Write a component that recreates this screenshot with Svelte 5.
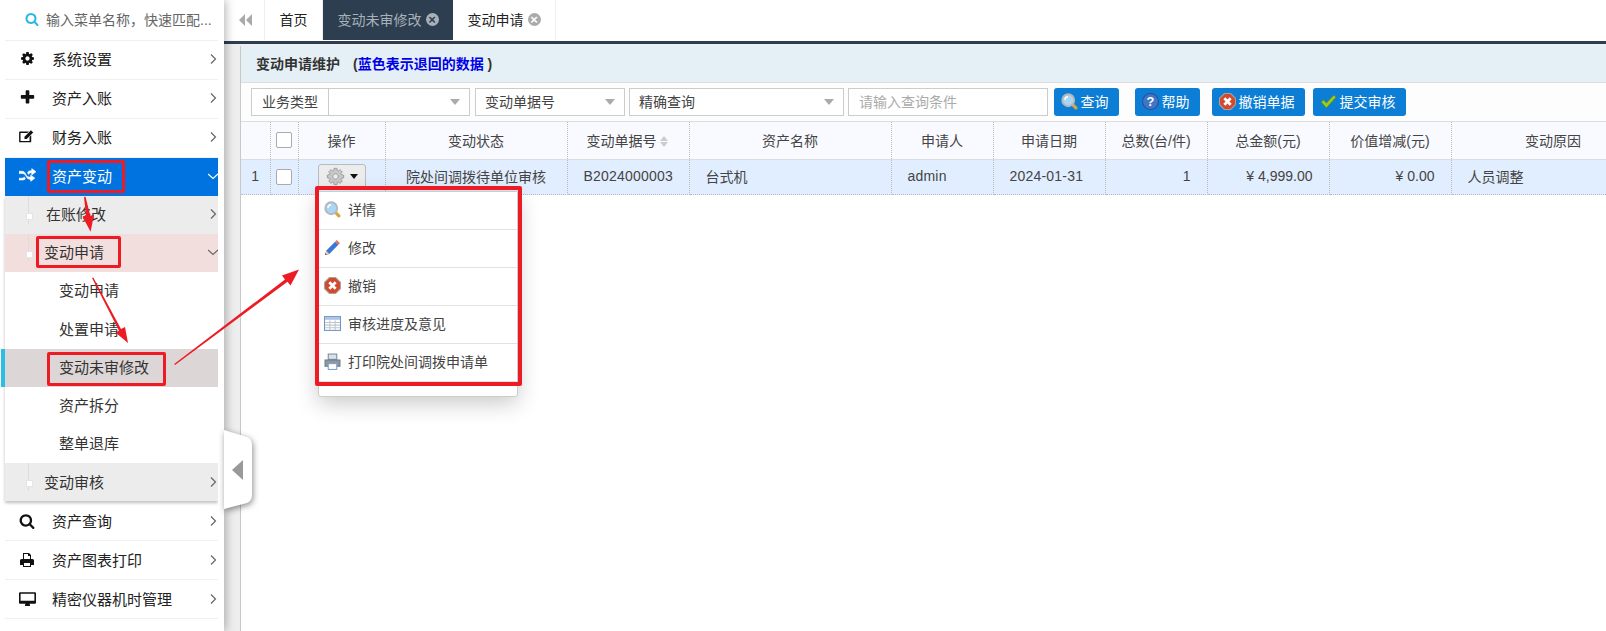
<script>
    const ICONS = {
        cog: "M1152 896q0-106-75-181t-181-75-181 75-75 181 75 181 181 75 181-75 75-181zm512-109v222q0 12-8 23t-20 13l-185 28q-19 54-39 91 35 50 107 138 10 12 10 25t-9 23q-27 37-99 108t-94 71q-12 0-26-9l-138-108q-44 23-91 38-16 136-29 186-7 28-36 28h-222q-14 0-24.500-8.500t-11.500-21.500l-28-184q-49-16-90-37l-141 107q-10 9-25 9-14 0-25-11-126-114-165-168-7-10-7-23 0-12 8-23 15-21 51-66.500t54-70.500q-27-50-41-99l-183-27q-13-2-21-12.500t-8-23.500v-222q0-12 8-23t19-13l186-28q14-46 39-92-40-57-107-138-10-12-10-24 0-10 9-23 26-36 98.500-107.500t94.500-71.500q13 0 26 10l138 107q44-23 91-38 16-136 29-186 7-28 36-28h222q14 0 24.500 8.500t11.500 21.500l28 184q49 16 90 37l142-107q9-9 24-9 13 0 25 10 129 119 165 170 7 8 7 22 0 12-8 23-15 21-51 66.500t-54 70.500q26 50 41 98l183 28q13 2 21 12.500t8 23.500z",
        plus: "M1600 736v192q0 40-28 68t-68 28h-416v416q0 40-28 68t-68 28h-192q-40 0-68-28t-28-68v-416h-416q-40 0-68-28t-28-68v-192q0-40 28-68t68-28h416v-416q0-40 28-68t68-28h192q40 0 68 28t28 68v416h416q40 0 68 28t28 68z",
        search: "M1216 832q0-185-131.500-316.500t-316.500-131.500-316.500 131.500-131.500 316.500 131.500 316.500 316.500 131.500 316.500-131.500 131.500-316.500zm512 832q0 52-38 90t-90 38q-54 0-90-38l-343-342q-179 124-399 124-143 0-273.500-55.500t-225-150-150-225-55.500-273.500 55.500-273.500 150-225 225-150 273.500-55.500 273.500 55.500 225 150 150 225 55.500 273.500q0 220-124 399l343 343q37 37 37 90z",
        edit: "M224 384h1024l-192 192H288v896h1024V1024l192-192v704q0 96-96 96H224q-96 0-96-96V480q0-96 96-96z M736 992l736-736 256 256-736 736H736z",
        random: "M0 512h384q256 0 384 256l128 256q128 192 384 192h128v-256l512 384-512 384v-256h-128q-256 0-384-256l-128-256q-128-192-384-192H0z M0 1344h384q128 0 256-128l128 224q-128 128-384 128H0z M1024 640q128-192 384-192h128V192l512 384-512 384V704h-128q-128 0-256 192z",
        print: "M512 128h768l256 256v512h192q192 0 192 192v576h-384v256H512v-256H128v-576q0-192 192-192h192z M640 256v640h768V512h-256V256z M640 1408v384h768v-384z",
        desktop: "M128 256h1792q128 0 128 128v1152q0 128-128 128h-640l64 256H704l64-256H128q-128 0-128-128V384q0-128 128-128z M192 448v832h1664V448z"
    };

    const BOXES = { cog: 1792, plus: 1792, search: 1792, edit: 2048, random: 2048, print: 2048, desktop: 2048 };

    const topMenu = [
        { label: "系统设置", icon: "cog", size: 15 },
        { label: "资产入账", icon: "plus", size: 17 },
        { label: "财务入账", icon: "edit", size: 18 }
    ];
    const bottomMenu = [
        { label: "资产查询", icon: "search", size: 16 },
        { label: "资产图表打印", icon: "print", size: 16 },
        { label: "精密仪器机时管理", icon: "desktop", size: 17 }
    ];
    const children = [
        { label: "变动申请" },
        { label: "处置申请", tall: true },
        { label: "变动未审修改", selected: true },
        { label: "资产拆分" },
        { label: "整单退库" }
    ];
    const columns = [
        { w: 29, t: "" },
        { w: 28, t: "", check: true },
        { w: 87, t: "操作" },
        { w: 182, t: "变动状态" },
        { w: 122, t: "变动单据号", sort: true },
        { w: 202, t: "资产名称" },
        { w: 102, t: "申请人" },
        { w: 112, t: "申请日期" },
        { w: 102, t: "总数(台/件)" },
        { w: 122, t: "总金额(元)" },
        { w: 122, t: "价值增减(元)" },
        { w: 204, t: "变动原因" }
    ];
    const actions = [
        { label: "详情", icon: "lens" },
        { label: "修改", icon: "pencil" },
        { label: "撤销", icon: "cancel" },
        { label: "审核进度及意见", icon: "grid" },
        { label: "打印院处间调拨申请单", icon: "printer" }
    ];
    const buttons = [
        { label: "查询", icon: "lens", w: 65, gap: 6 },
        { label: "帮助", icon: "help", w: 65, gap: 16 },
        { label: "撤销单据", icon: "cancel", w: 93, gap: 12 },
        { label: "提交审核", icon: "check", w: 93, gap: 8 }
    ];
</script>

{#snippet fa(name, size)}
    <svg class="fa" width={size} height={size} viewBox="0 0 {BOXES[name]} {BOXES[name]}">
        <path fill="currentColor" stroke="currentColor" stroke-width={name === "random" ? 70 : 0} fill-rule="evenodd" d={ICONS[name]} />
    </svg>
{/snippet}

{#snippet chevron(open)}
    <svg class="chev" width="10" height="10" viewBox="0 0 10 10">
        <path fill="none" stroke="#666" stroke-width="1.2" d={open ? "M0 3l5 4.500 5-4.500" : "M3 .5l4.500 4.500L3 9.500"} />
    </svg>
{/snippet}

{#snippet color(name)}
    <svg class="ci" width="17" height="17" viewBox="0 0 16 16">
        {#if name === "lens"}
            <path d="M10.500 10.500l3.500 3.500" stroke="#d9a441" stroke-width="3" stroke-linecap="round" />
            <circle cx="6.800" cy="6.800" r="5.600" fill="#a9d6f2" stroke="#b4b8bc" stroke-width="1.800" />
            <path d="M3.600 6.500a3.300 3.300 0 0 1 3-3" fill="none" stroke="#fff" stroke-width="1.300" />
        {:else if name === "pencil"}
            <path d="M1 15l1-4 8.500-8.500 3 3L5 14z" fill="#3a78d6" />
            <path d="M10.500 2.500l1.500-1.500 3 3-1.500 1.500z" fill="#e0705a" />
            <path d="M1 15l1-4 3 3z" fill="#f1cf8e" />
            <path d="M1 15l.4-1.600 1.200 1.200z" fill="#333" />
        {:else if name === "cancel"}
            <path d="M5 .5h6L15.500 5v6L11 15.500H5L.5 11V5z" fill="#d2492e" stroke="#a9a29c" />
            <path d="M5 5l6 6M11 5l-6 6" stroke="#fff" stroke-width="2.600" />
        {:else if name === "grid"}
            <rect x=".5" y="1.500" width="15" height="13" fill="#fff" stroke="#6f94c4" />
            <rect x="1" y="2" width="14" height="2.500" fill="#a9c2e4" />
            <path d="M1 7h14M1 9.500h14M1 12h14M5.500 5v9M10.500 5v9" stroke="#bfc6ce" />
        {:else if name === "printer"}
            <rect x="4" y="1" width="8" height="5" fill="#d6e2ee" stroke="#7e8c9a" />
            <path d="M1 6.500h14v6H1z" fill="#8d98a3" stroke="#6e7882" />
            <rect x="4" y="10" width="8" height="5.500" fill="#fff" stroke="#7ea2c8" />
        {:else if name === "help"}
            <circle cx="8" cy="8" r="7.500" fill="#3f76c6" stroke="#2b4f94" />
            <text x="8" y="12" text-anchor="middle" class="q">?</text>
        {:else}
            <path d="M1 8.500l2.500-2 2.500 3L13 2l2 2-9 10z" fill="#9ccc1e" stroke="#5d8a0e" stroke-width=".7" />
        {/if}
    </svg>
{/snippet}

<div class="app">
    <aside class="side">
        <div class="search">
            <span class="search-ico">{@render fa("search", 14)}</span>
            <span>输入菜单名称，快速匹配...</span>
        </div>
        {#each topMenu as m}
            <div class="row">
                <span class="row-ico">{@render fa(m.icon, m.size)}</span>
                <span class="row-txt">{m.label}</span>
                {@render chevron(false)}
            </div>
        {/each}
        <div class="row active">
            <span class="row-ico">{@render fa("random", 17)}</span>
            <span class="row-txt">资产变动</span>
            {@render chevron(true)}
        </div>
        <div class="sub-list">
            <div class="sub grey"><i class="dot"></i><span class="first">在账修改</span>{@render chevron(false)}</div>
            <div class="sub pink"><i class="dot"></i><span>变动申请</span>{@render chevron(true)}</div>
            {#each children as c}
                <div class="child" class:tall={c.tall} class:selected={c.selected}>{c.label}</div>
            {/each}
            <div class="sub grey"><i class="dot"></i><span>变动审核</span>{@render chevron(false)}</div>
        </div>
        {#each bottomMenu as m}
            <div class="row low">
                <span class="row-ico">{@render fa(m.icon, m.size)}</span>
                <span class="row-txt">{m.label}</span>
                {@render chevron(false)}
            </div>
        {/each}
    </aside>

    <main class="main">
        <nav class="tabs">
            <div class="collapse">
                <svg width="14" height="12" viewBox="0 0 14 12"><path fill="#aaa" d="M6 0v12L0 6zM13 0v12L7 6z" /></svg>
            </div>
            <div class="tab">首页</div>
            <div class="tab dark">变动未审修改<i class="close">×</i></div>
            <div class="tab">变动申请<i class="close">×</i></div>
        </nav>
        <div class="content">
            <section class="panel">
                <div class="title">
                    <b>变动申请维护</b>
                    <b class="note">(<span>蓝色表示退回的数据</span> )</b>
                </div>
                <div class="toolbar">
                    <div class="field label">业务类型</div>
                    <div class="field select w-type"><span></span><i></i></div>
                    <div class="field select w-no"><span>变动单据号</span><i></i></div>
                    <div class="field select w-mode"><span>精确查询</span><i></i></div>
                    <div class="field input">请输入查询条件</div>
                    {#each buttons as b}
                        <button style="width:{b.w}px;margin-left:{b.gap}px">{@render color(b.icon)}{b.label}</button>
                    {/each}
                </div>
                <table>
                    <colgroup>
                        {#each columns as c}<col style="width:{c.w}px" />{/each}
                    </colgroup>
                    <thead>
                        <tr>
                            {#each columns as c}
                                <th>
                                    {#if c.check}<i class="check"></i>{/if}
                                    {c.t}
                                    {#if c.sort}<i class="sort"></i>{/if}
                                </th>
                            {/each}
                        </tr>
                    </thead>
                    <tbody>
                        <tr>
                            <td class="c">1</td>
                            <td class="c"><i class="check"></i></td>
                            <td class="c">
                                <span class="gear">
                                    <svg width="19" height="19" viewBox="0 0 1792 1792"><path fill="#c8c8c8" stroke="#8a8a8a" stroke-width="70" d={ICONS.cog} /></svg>
                                    <i class="caret"></i>
                                </span>
                            </td>
                            <td class="c">院处间调拨待单位审核</td>
                            <td class="l latin">B2024000003</td>
                            <td class="l">台式机</td>
                            <td class="l latin">admin</td>
                            <td class="l latin">2024-01-31</td>
                            <td class="r">1</td>
                            <td class="r">¥ 4,999.00</td>
                            <td class="r">¥ 0.00</td>
                            <td class="l">人员调整</td>
                        </tr>
                    </tbody>
                </table>
            </section>
        </div>
    </main>

    <ul class="menu">
        {#each actions as a}
            <li>{@render color(a.icon)}<span>{a.label}</span></li>
        {/each}
    </ul>

    <svg class="handle" width="44" height="96" viewBox="0 0 44 96">
        <path d="M0 6l23 7q5 2 5 8v50q0 6-5 8L0 85z" fill="#fff" />
        <path d="M19 36v20L8 46z" fill="#999" />
    </svg>

    <!-- red annotations drawn on top of the screenshot -->
    <i class="mark m1"></i>
    <i class="mark m2"></i>
    <i class="mark m3"></i>
    <i class="mark m4"></i>
    <svg class="arrows" width="1606" height="631" viewBox="0 0 1606 631">
        <path fill="#ed1c24" d="M84 197l1.500-.3 4.800 19 3.700-1-3.400 17-8-15 3.400-.9z" />
        <path fill="#ed1c24" d="M92 278l1.300-.5 27.700 51.500 4-2 3 16-12.500-10.500 3.500-1.800z" />
        <path fill="#ed1c24" d="M175 365l-.8-1 110.800-84.500-3-4 17-6-8.500 16-3-3.800z" />
    </svg>
</div>

<style>
    :global(body) {
        margin: 0;
        background: #fff;
    }

    .app {
        position: relative;
        display: flex;
        width: 1606px;
        height: 631px;
        overflow: hidden;
        font-family: "Liberation Sans", "Noto Sans CJK SC", sans-serif;
        font-size: 14px;
        color: #333;
    }

    i {
        font-style: normal;
    }

    /* sidebar */
    .side {
        position: relative;
        z-index: 2;
        flex: 0 0 224px;
        box-sizing: border-box;
        padding: 0 6px 0 5px;
        background: #fff;
        box-shadow: 2px 0 9px rgba(0, 0, 0, 0.28);
        color: #222;
        font-size: 15px;
    }
    .search {
        display: flex;
        align-items: center;
        gap: 7px;
        height: 41px;
        box-sizing: border-box;
        padding: 0 0 2px 20px;
        border-bottom: 1px solid #f0f0f0;
        color: #666;
        font-size: 14px;
        white-space: nowrap;
    }
    .search-ico {
        display: flex;
        color: #2bb7e3;
    }
    .row {
        display: flex;
        align-items: center;
        height: 39px;
        box-sizing: border-box;
        padding-bottom: 3px;
        border-bottom: 1px solid #f0f0f0;
        overflow: hidden;
    }
    .low {
        padding-bottom: 1px;
    }
    .row-ico {
        display: flex;
        justify-content: center;
        width: 44px;
        margin-right: 3px;
        color: #111;
    }
    .row-txt {
        flex: 1;
    }
    .chev {
        flex: none;
    }
    .active {
        height: 38px;
        background: #0073e0;
        color: #fff;
        border: 0;
    }
    .active .row-ico {
        color: #fff;
    }
    .active .chev path {
        stroke: #fff;
    }
    .sub-list {
        margin-bottom: 1px;
        box-shadow: 0 2px 3px rgba(0, 0, 0, 0.25);
        clip-path: inset(0 0 -8px -6px);
    }
    .sub {
        position: relative;
        display: flex;
        align-items: center;
        height: 38px;
        box-sizing: border-box;
        padding: 0 0 3px 39px;
        overflow: hidden;
        color: #333;
    }
    .sub:last-child {
        padding-bottom: 1px;
    }
    .sub span {
        flex: 1;
    }
    .sub .first {
        padding-left: 2px;
    }
    .grey {
        background: #ececec;
    }
    .pink {
        background: #f3dede;
    }
    .sub::before {
        content: "";
        position: absolute;
        left: 23px;
        top: 0;
        bottom: 10px;
        border-left: 1px solid #ddd;
    }
    .dot {
        position: absolute;
        left: 21px;
        top: 17px;
        width: 5px;
        height: 5px;
        background: #fff;
        border: 1px solid #e4e4e4;
    }
    .child {
        display: flex;
        align-items: center;
        height: 38px;
        box-sizing: border-box;
        padding: 0 0 3px 54px;
        background: #fff;
        color: #333;
    }
    .tall {
        height: 39px;
    }
    .selected {
        position: relative;
        background: #dcd6d6;
    }
    .selected::before {
        content: "";
        position: absolute;
        left: -4px;
        top: 0;
        bottom: 0;
        width: 4px;
        background: #2bbde8;
    }

    /* tabs and page */
    .main {
        flex: 1;
        min-width: 0;
        display: flex;
        flex-direction: column;
    }
    .tabs {
        display: flex;
        height: 44px;
        box-sizing: border-box;
        border-bottom: 3px solid #2c3e50;
        background: #fff;
        padding-bottom: 1px;
        color: #222;
    }
    .collapse {
        display: flex;
        align-items: center;
        justify-content: center;
        width: 41px;
        padding-left: 4px;
        box-sizing: border-box;
        border-right: 1px solid #eee;
    }
    .tab {
        display: flex;
        align-items: center;
        justify-content: center;
        gap: 4px;
        box-sizing: border-box;
        padding: 0 0 2px;
        border-right: 1px solid #eee;
    }
    .tab:nth-child(2) {
        width: 58px;
    }
    .dark {
        width: 130px;
        background: #2c3e50;
        color: #a8b0b8;
        border: 0;
    }
    .tab:last-child {
        width: 103px;
    }
    .close {
        display: inline-flex;
        align-items: center;
        justify-content: center;
        width: 13px;
        height: 13px;
        border-radius: 50%;
        background: #aaa;
        color: #fff;
        font-size: 13px;
        font-weight: bold;
        line-height: 1;
    }
    .dark .close {
        background: #a8b0b8;
        color: #2c3e50;
    }
    .content {
        flex: 1;
        padding: 2px 0 0 16px;
        background: #eee;
    }
    .panel {
        height: 100%;
        border-left: 1px solid #c8c8c8;
        background: #fff;
        overflow: hidden;
    }
    .title {
        display: flex;
        align-items: center;
        height: 37px;
        box-sizing: border-box;
        padding: 0 0 2px 15px;
        background: #e5f0f6;
        border-bottom: 1px solid #ddd;
        color: #333;
    }
    .note {
        margin-left: 13px;
    }
    .note span {
        color: #0000e6;
    }
    .toolbar {
        display: flex;
        align-items: center;
        height: 39px;
        box-sizing: border-box;
        padding-left: 10px;
        background: #fdfdfd;
        border-bottom: 1px solid #ddd;
    }
    .field {
        display: flex;
        align-items: center;
        height: 28px;
        box-sizing: border-box;
        padding-bottom: 2px;
        border: 1px solid #ccc;
        background: #fff;
        color: #444;
        white-space: nowrap;
    }
    .label {
        width: 77px;
        justify-content: center;
        border-right: 0;
    }
    .select {
        position: relative;
        padding-left: 9px;
    }
    .select i {
        position: absolute;
        right: 9px;
        top: 10px;
        border: 5px solid transparent;
        border-top: 6px solid #aaa;
        border-bottom: 0;
    }
    .w-type {
        width: 142px;
    }
    .w-no {
        width: 150px;
        margin-left: 5px;
    }
    .w-mode {
        width: 215px;
        margin-left: 4px;
    }
    .input {
        width: 200px;
        margin-left: 4px;
        padding-left: 10px;
        color: #aaa;
    }
    button {
        display: flex;
        align-items: center;
        justify-content: center;
        gap: 3px;
        height: 28px;
        padding: 0 4px 2px 0;
        border: 0;
        border-radius: 3px;
        background: #0c7ed6;
        color: #fff;
        font: inherit;
        white-space: nowrap;
    }
    .ci {
        flex: none;
    }
    .q {
        fill: #fff;
        font-size: 12px;
        font-weight: bold;
    }

    /* table */
    table {
        width: 1414px;
        table-layout: fixed;
        border-collapse: collapse;
        color: #444;
    }
    th {
        height: 35px;
        padding: 0 0 2px;
        font-weight: normal;
        text-align: center;
        background: #f9faff;
        border-bottom: 1px solid #ddd;
        border-right: 1px dotted #bbb;
        white-space: nowrap;
    }
    td {
        height: 32px;
        padding: 0 16px 2px;
        background: #e1eeff;
        border-bottom: 1px dotted #bbb;
        border-right: 1px dotted #bbb;
        white-space: nowrap;
    }
    td.latin {
        letter-spacing: 0.2px;
    }
    td.c {
        padding: 0 0 2px;
        text-align: center;
    }
    td.r {
        text-align: right;
    }
    .check {
        display: inline-block;
        width: 14px;
        height: 14px;
        vertical-align: middle;
        border: 1px solid #aaa;
        border-radius: 2px;
        background: #fff;
    }
    .sort {
        position: relative;
        display: inline-block;
        width: 9px;
        height: 11px;
        vertical-align: middle;
    }
    .sort::before,
    .sort::after {
        content: "";
        position: absolute;
        left: 0;
        border: 4.5px solid transparent;
    }
    .sort::before {
        top: 0;
        border-top: 0;
        border-bottom: 5px solid #ccc;
    }
    .sort::after {
        bottom: 0;
        border-bottom: 0;
        border-top: 5px solid #ccc;
    }
    .gear {
        display: inline-flex;
        align-items: center;
        justify-content: center;
        gap: 5px;
        width: 48px;
        height: 24px;
        box-sizing: border-box;
        vertical-align: middle;
        border: 1px solid #bbb;
        border-radius: 3px 3px 0 0;
        background: #ececec;
    }
    .caret {
        border: 4.5px solid transparent;
        border-top: 5px solid #111;
        border-bottom: 0;
    }

    /* overlays */
    .menu {
        position: absolute;
        z-index: 4;
        left: 318px;
        top: 191px;
        width: 200px;
        height: 206px;
        box-sizing: border-box;
        margin: 0;
        padding: 0;
        list-style: none;
        background: #fff;
        border: 1px solid #ccc;
        border-radius: 0 0 3px 3px;
        box-shadow: 0 6px 22px rgba(0, 0, 0, 0.22);
        color: #444;
    }
    .menu li {
        display: flex;
        align-items: center;
        gap: 7px;
        height: 38px;
        box-sizing: border-box;
        padding: 0 0 3px 5px;
        border-bottom: 1px solid #e2e2e2;
    }
    .handle {
        position: absolute;
        z-index: 3;
        left: 224px;
        top: 424px;
        filter: drop-shadow(1px 2px 3px rgba(0, 0, 0, 0.45));
    }
    .mark {
        position: absolute;
        z-index: 5;
        box-sizing: border-box;
        border: 3px solid #ed1c24;
        border-radius: 2px;
    }
    .m1 {
        left: 47px;
        top: 160px;
        width: 78px;
        height: 33px;
    }
    .m2 {
        left: 36px;
        top: 236px;
        width: 85px;
        height: 32px;
    }
    .m3 {
        left: 47px;
        top: 352px;
        width: 119px;
        height: 34px;
    }
    .m4 {
        left: 315px;
        top: 186px;
        width: 207px;
        height: 200px;
        border-width: 4px;
    }
    .arrows {
        position: absolute;
        z-index: 6;
        left: 0;
        top: 0;
        pointer-events: none;
    }
</style>
